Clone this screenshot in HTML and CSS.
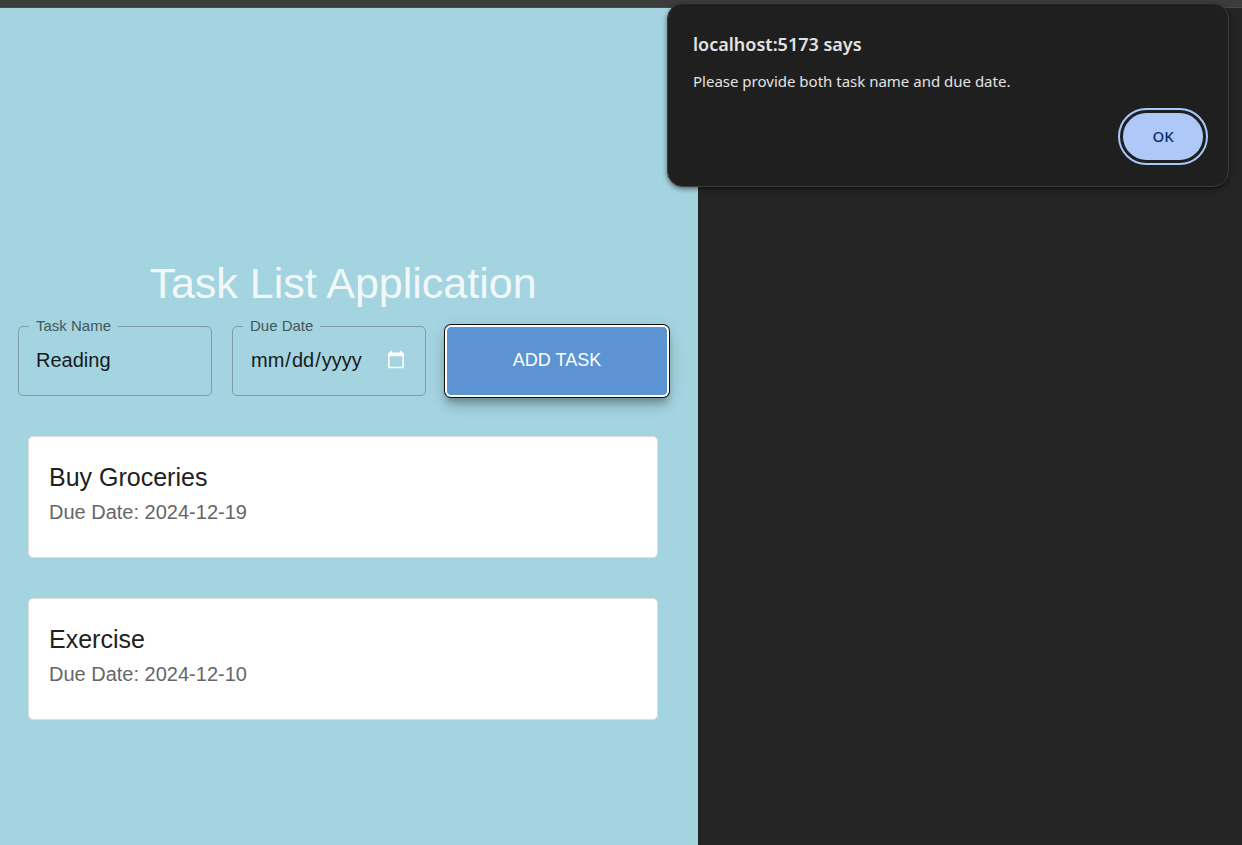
FILE: index.html
```html
<!DOCTYPE html>
<html lang="en">
<head>
<meta charset="utf-8">
<title>Task List Application</title>
<link rel="stylesheet" href="styles.css">
</head>
<body class="page">
<div class="browser-edge"></div>
<main class="app">
  <div class="content">
    <h1 class="title">Task List Application</h1>
    <form class="task-form">
      <fieldset class="field">
        <legend class="legend"><label for="task-name">Task Name</label></legend>
        <input class="input" id="task-name" type="text" value="Reading">
      </fieldset>
      <fieldset class="field">
        <legend class="legend"><label for="due-date">Due Date</label></legend>
        <input class="input input-date" id="due-date" type="date">
      </fieldset>
      <button class="add-button" type="button">ADD TASK</button>
    </form>
    <ul class="tasks">
      <li class="task">
        <h2 class="task-name">Buy Groceries</h2>
        <p class="task-date">Due Date: 2024-12-19</p>
      </li>
      <li class="task">
        <h2 class="task-name">Exercise</h2>
        <p class="task-date">Due Date: 2024-12-10</p>
      </li>
    </ul>
  </div>
</main>
<section class="alert" role="alertdialog" aria-labelledby="alert-title" aria-describedby="alert-text">
  <h2 class="alert-title" id="alert-title">localhost:5173 says</h2>
  <p class="alert-text" id="alert-text">Please provide both task name and due date.</p>
  <button class="ok-button" type="button">OK</button>
</section>
</body>
</html>
```

FILE: styles.css
```css
* {
  box-sizing: border-box;
}

.page {
  margin: 0;
  min-height: 100vh;
  display: flex;
  flex-direction: column;
  background: #242424;
  font-family: "Liberation Sans", Arial, sans-serif;
}

.browser-edge {
  height: 8px;
  background: #3c3c3c;
  border-bottom: 1px solid #484848;
}

.app {
  flex: 1;
  width: 56.2%;
  padding: 249px 30px 40px 18px;
  background: #a4d4e0;
}

.title {
  margin: 0 0 16px;
  font-size: 43px;
  line-height: 53px;
  font-weight: 400;
  text-align: center;
  color: rgba(255, 255, 255, 0.87);
}

.task-form {
  display: grid;
  grid-template-columns: 194fr 194fr 222fr;
  gap: 20px;
}

.field {
  min-width: 0;
  height: 79px;
  margin: -9px 0 0;
  padding: 0 17px 0 10px;
  border: 1px solid #7b9ea8;
  border-radius: 5px;
}

.legend {
  padding: 0 7px;
  font-size: 15px;
  line-height: 18px;
  color: #41575c;
}

.input {
  display: block;
  width: 100%;
  height: 30px;
  margin-top: 10px;
  padding: 0 0 0 7px;
  border: 0;
  outline: 0;
  background: transparent;
  font-family: inherit;
  font-size: 20px;
  color: #151b1d;
}

.input-date {
  color-scheme: dark;
}

.add-button {
  height: 70px;
  padding: 0 0 2px;
  border: 1px solid #fff;
  border-radius: 5px;
  background: #5b93d3;
  box-shadow: 0 0 0 1px #fff, 0 0 0 2px #101010, 0 6px 6px rgba(0, 0, 0, 0.2), 0 10px 13px rgba(0, 0, 0, 0.14), 0 4px 20px rgba(0, 0, 0, 0.12);
  font-family: inherit;
  font-size: 18px;
  color: #fff;
}

.tasks {
  display: grid;
  gap: 40px;
  margin: 0;
  padding: 40px 10px 0;
  list-style: none;
}

.task {
  padding: 24px 20px 30px;
  border: 1px solid #dcdede;
  border-radius: 5px;
  background: #fff;
}

.task-name {
  margin: 0 0 4px;
  font-size: 25px;
  line-height: 32px;
  font-weight: 400;
  color: #212121;
}

.task-date {
  margin: 0;
  font-size: 20px;
  line-height: 30px;
  color: #666;
}

.alert {
  position: absolute;
  top: 3px;
  right: 13px;
  width: 562px;
  padding: 26px 25px 26px;
  display: flex;
  flex-direction: column;
  border: 1px solid #3c3c3c;
  border-radius: 16px;
  background: #1f1f1f;
  box-shadow: 0 2px 5px rgba(0, 0, 0, 0.5);
  font-family: "Noto Sans", "Open Sans", sans-serif;
  color: #e3e3e3;
}

.alert-title {
  margin: 0 0 11px;
  font-size: 18px;
  line-height: 28px;
  font-weight: 600;
}

.alert-text {
  margin: 0 0 20px;
  font-size: 15px;
  line-height: 24px;
}

.ok-button {
  align-self: flex-end;
  width: 80px;
  height: 47px;
  padding: 0 0 1px;
  border: 0;
  border-radius: 24px;
  outline: 2px solid #a8c7fa;
  outline-offset: 3px;
  background: #aec9f7;
  font-family: inherit;
  font-size: 15px;
  font-weight: 500;
  color: #062e6f;
}
```
